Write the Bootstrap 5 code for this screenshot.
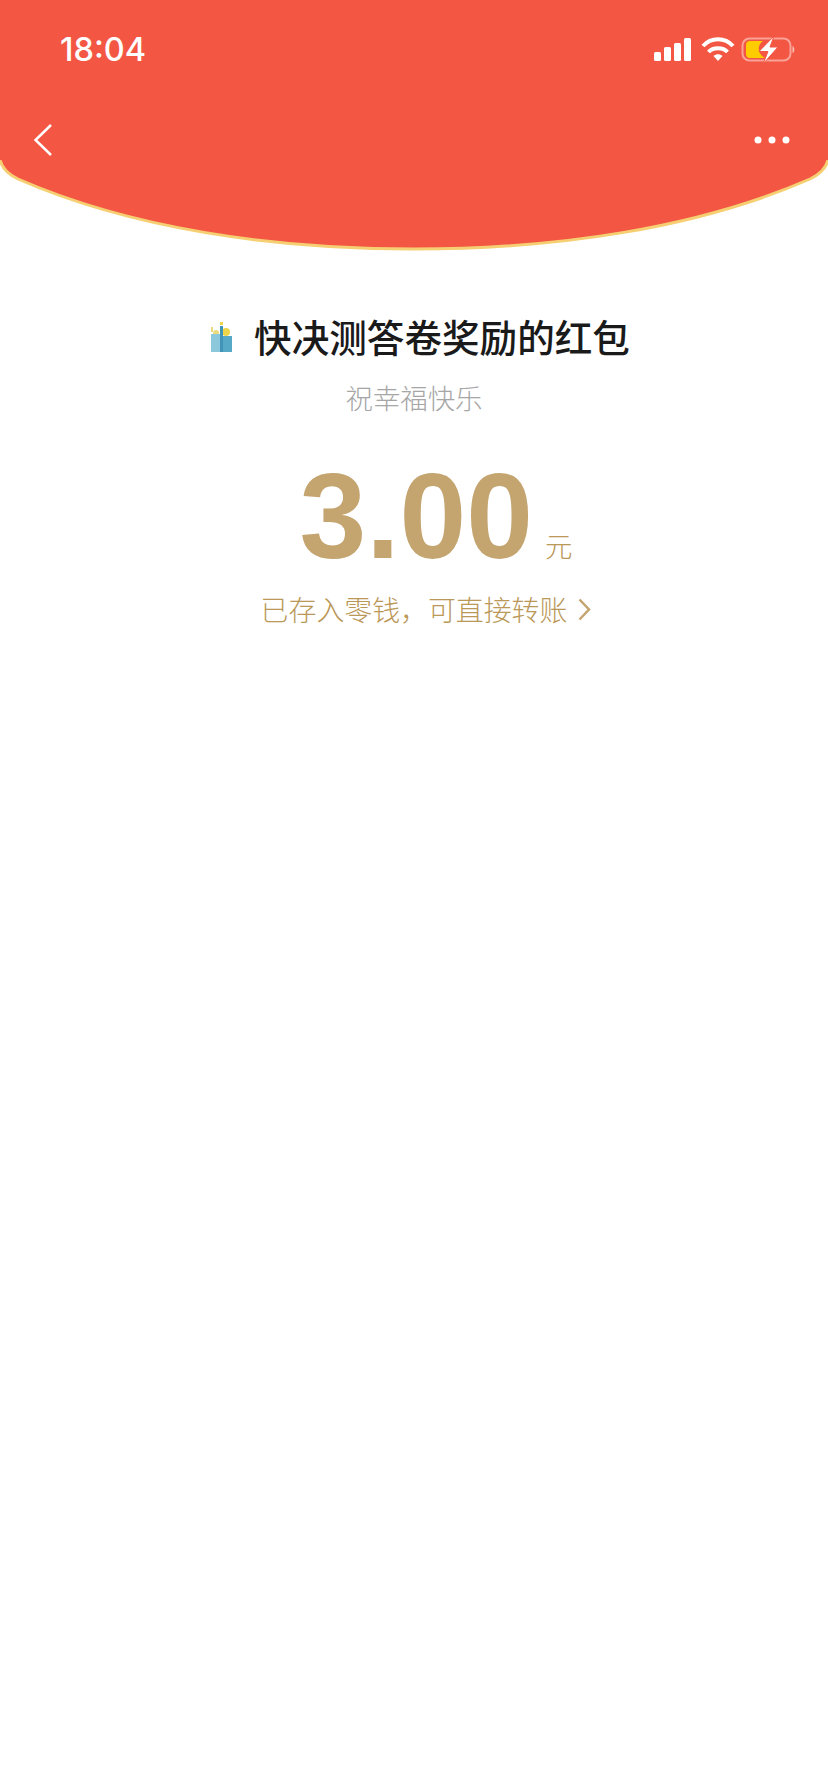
<!DOCTYPE html>
<html lang="zh">

<head>
    <meta charset="UTF-8">
    <meta name="viewport" content="width=device-width, initial-scale=1.0">
    <title>红包详情</title>
    <link href="https://cdn.jsdelivr.net/npm/bootstrap@5.3.0/dist/css/bootstrap.min.css" rel="stylesheet">
    <style>
        body {
            font-family: "Noto Sans CJK SC", "Noto Sans", sans-serif;
            background: #fff;
        }

        .hb-head {
            background: #f35744;
            color: #fff;
        }

        .hb-status {
            height: 98px;
            padding: 1px 33px 0 60px;
        }

        .hb-time {
            font-family: Inter, sans-serif;
            font-weight: 500;
            font-size: 32.500px;
            line-height: 1;
            margin-top: 2px;
        }

        .hb-nav {
            height: 62px;
            padding: 26px 38px 4px 34px;
        }

        .hb-curve {
            display: block;
        }

        .hb-title {
            margin-top: 60px;
            padding-left: 11px;
            gap: 21px;
            height: 48px;
        }

        .hb-title-icon {
            margin-left: 2px;
            margin-top: 2px;
        }

        .hb-title-text {
            font-size: 37.600px;
            font-weight: 500;
            line-height: 48px;
            color: #1a1a1a;
        }

        .hb-wish {
            margin-top: 17px;
            font-size: 27.400px;
            font-weight: 300;
            line-height: 40px;
            color: #a6a6a6;
        }

        .hb-amount {
            margin-top: 44px;
            padding-left: 44px;
            gap: 12px;
            color: #c4a46f;
            height: 110px;
        }

        .hb-money {
            font-family: "Liberation Sans", sans-serif;
            font-weight: 700;
            font-size: 120px;
            line-height: 110px;
        }

        .hb-unit {
            font-size: 27.400px;
            font-weight: 300;
            line-height: 32px;
            margin-bottom: 10px;
            color: #ba9858;
        }

        .hb-link {
            margin-top: 18px;
            padding-left: 24px;
            gap: 11px;
            font-size: 27.900px;
            font-weight: 300;
            line-height: 40px;
            color: #ba9858;
        }
    </style>
</head>

<body>
    <div class="hb-head">
        <div class="hb-status d-flex align-items-center justify-content-between">
            <span class="hb-time">18:04</span>
            <div class="d-flex align-items-center">
                <svg width="142" height="28" viewBox="0 0 142 28">
                    <!-- signal -->
                    <g fill="#fff">
                        <rect x="1" y="16" width="7" height="9" rx="1.500" />
                        <rect x="11" y="11" width="7" height="14" rx="1.500" />
                        <rect x="21" y="7" width="7" height="18" rx="1.500" />
                        <rect x="31" y="2" width="7" height="23" rx="1.500" />
                    </g>
                    <!-- wifi -->
                    <g fill="none" stroke="#fff" stroke-width="4">
                        <path d="M50 10 C58 1 72 1 80 10" />
                        <path d="M55.500 16 C60 11 70 11 74.500 16" />
                    </g>
                    <path d="M60.500 20 C63 17.500 67 17.500 69.500 20 L65 25 Z" fill="#fff" />
                    <!-- battery -->
                    <rect x="89.500" y="2.500" width="48" height="22" rx="7" fill="none" stroke="#fff" stroke-opacity=".45" stroke-width="2" />
                    <path d="M139.500 10 C142 11 142 16 139.500 17 Z" fill="#fff" fill-opacity=".6" />
                    <path d="M97 5 H110 C104 9 104 18 112 22 H97 C94 22 93 20 93 18 V9 C93 7 94 5 97 5 Z" fill="#ffcc00" />
                    <path d="M121 0 L106 15.500 H115 L110 28 L125 11 H117 Z" fill="#fff" stroke="#f35744" stroke-width="1" />
                </svg>
            </div>
        </div>
        <div class="hb-nav d-flex align-items-center justify-content-between">
            <svg width="18" height="32" viewBox="0 0 18 32">
                <path d="M17 1 L1.500 16 L17 31" fill="none" stroke="#fff" stroke-width="2.500" />
            </svg>
            <svg width="36" height="8" viewBox="0 0 36 8">
                <circle cx="4" cy="4" r="3.500" fill="#fff" />
                <circle cx="18" cy="4" r="3.500" fill="#fff" />
                <circle cx="32" cy="4" r="3.500" fill="#fff" />
            </svg>
        </div>
    </div>
    <svg class="hb-curve" width="828" height="92" viewBox="0 0 828 92">
        <path d="M0 0 Q3 12 18 19 C130 68 270 89 414 89 C558 89 698 68 810 19 Q825 12 828 0 Z" fill="#f35744" />
        <path d="M0 0 Q3 12 18 19 C130 68 270 89 414 89 C558 89 698 68 810 19 Q825 12 828 0" fill="none" stroke="#f5cf72" stroke-width="3" />
    </svg>

    <div class="hb-title d-flex align-items-center justify-content-center">
        <svg class="hb-title-icon" width="22" height="32" viewBox="0 0 22 32">
            <circle cx="5" cy="12" r="3" fill="#ecdb7c" />
            <circle cx="15" cy="11" r="4" fill="#ecd548" />
            <rect x="9" y="1" width="3" height="3" fill="#ecd548" />
            <rect x="0" y="6" width="2" height="5" fill="#ecdb7c" />
            <rect x="0" y="13" width="9" height="18" fill="#8cc8dc" />
            <rect x="9" y="5" width="3" height="26" fill="#3f94b8" />
            <rect x="12" y="15" width="9" height="16" fill="#56aac8" />
        </svg>
        <span class="hb-title-text">快决测答卷奖励的红包</span>
    </div>
    <div class="hb-wish text-center">祝幸福快乐</div>
    <div class="hb-amount d-flex align-items-end justify-content-center">
        <span class="hb-money">3.00</span>
        <span class="hb-unit">元</span>
    </div>
    <div class="hb-link d-flex align-items-center justify-content-center">
        <span>已存入零钱，可直接转账</span>
        <svg width="13" height="23" viewBox="0 0 13 23">
            <path d="M1.500 1.500 L11 11.500 L1.500 21.500" fill="none" stroke="#c4a46f" stroke-width="2.500" />
        </svg>
    </div>

    <script src="https://cdn.jsdelivr.net/npm/bootstrap@5.3.0/dist/js/bootstrap.bundle.min.js"></script>
</body>

</html>
